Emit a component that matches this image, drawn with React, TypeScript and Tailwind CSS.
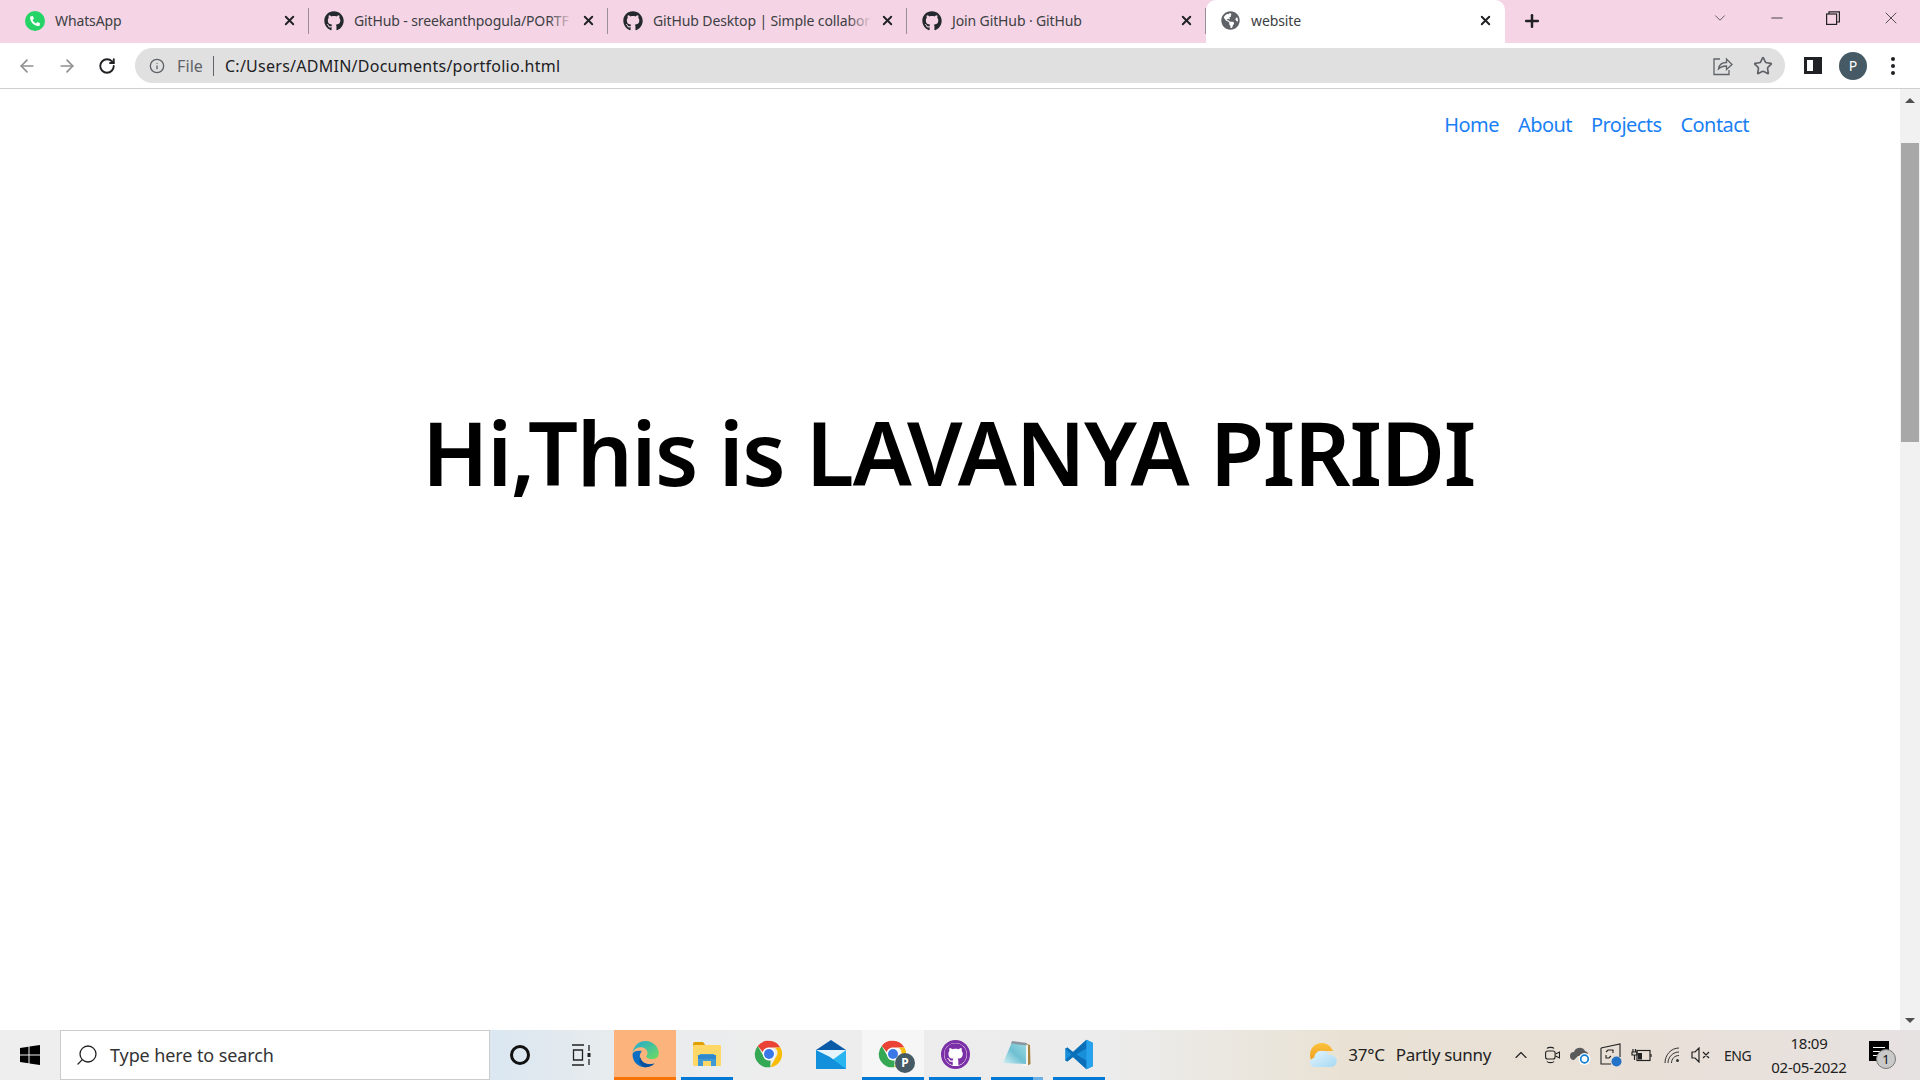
import React from 'react';
import { FaGithub, FaGlobeAmericas, FaPhoneAlt } from 'react-icons/fa';
import { ArrowLeft, ArrowRight, RotateCw, Info, Star, X, Plus, Minus, ChevronDown, ChevronUp, Search } from 'lucide-react';

const font = { fontFamily: '"Noto Sans", sans-serif' };

const Tab: React.FC<{ title: string; icon: React.ReactNode; fade?: boolean; first?: boolean }> = ({ title, icon, fade, first }) => (
  <div className={`flex items-center h-[43px] w-[299px] pl-[15px] pb-[2px] ${first ? 'ml-[10px]' : ''}`}>
    <div className="w-[20px] h-[20px] shrink-0 flex items-center justify-center">{icon}</div>
    <div className="relative flex-1 ml-[10px] whitespace-nowrap text-[14px] tracking-[-0.12px] text-[#3c4043]">
      {title}
      {fade && <div className="absolute right-0 top-0 bottom-0 w-[24px] bg-gradient-to-l from-[#f5d5e5] to-transparent" />}
    </div>
    <X className="w-[15px] h-[15px] ml-[8px] shrink-0 text-[#202124]" strokeWidth={3} />
    <div className="w-px h-[26px] bg-[#9b8f96] ml-[11px] shrink-0" />
  </div>
);

const TaskSlot: React.FC<{ children: React.ReactNode; active?: boolean; open?: boolean; focus?: boolean; multi?: boolean }> = ({ children, active, open, focus, multi }) => (
  <div className={`relative w-[62px] h-[50px] flex items-center justify-center pb-[2px] ${active ? 'bg-[#fdb47c]' : ''} ${focus ? 'bg-[#f6f6f6]' : ''}`}>
    {children}
    {active && <div className="absolute left-0 right-0 bottom-0 h-[3px] bg-[#f97306]" />}
    {open && (
      <div className={`absolute bottom-0 h-[3px] flex ${focus ? 'left-0 right-0' : 'left-[5px] right-[5px]'}`}>
        <div className="flex-1 bg-[#0078d4]" />
        {multi && <div className="w-[10px] bg-[#6cb0e6]" />}
      </div>
    )}
  </div>
);

const ChromeIcon: React.FC<{ size?: number }> = ({ size = 28 }) => (
  <svg width={size} height={size} viewBox="0 0 48 48">
    <path d="M24 3a21 21 0 0 1 18.200 10.500H24a10.500 10.500 0 0 0-10 7.200L6 11A21 21 0 0 1 24 3z" fill="#ea4335" />
    <path d="M42.200 13.500A21 21 0 0 1 26 45L34.700 29.500A10.500 10.500 0 0 0 33 13.500z" fill="#fbbc04" />
    <path d="M26 45A21 21 0 0 1 6 11l9 16a10.500 10.500 0 0 0 11.500 7.200z" fill="#34a853" />
    <circle cx="24" cy="24" r="10" fill="#fff" />
    <circle cx="24" cy="24" r="8" fill="#3b78e7" />
  </svg>
);

const EdgeIcon = () => (
  <svg width="30" height="32" viewBox="0 0 48 48">
    <defs>
      <linearGradient id="edgeTop" x1="0" y1="0" x2="1" y2="1">
        <stop offset="0" stopColor="#1fa9d8" />
        <stop offset="1" stopColor="#6fdc5c" />
      </linearGradient>
    </defs>
    <path d="M4 24C5 10 15 3 25 3c12 0 21 9 21 20 0 6-5 9-11 9-5 0-9-2-9-4 0-1 2-2 2-6 0-6-6-9-11-9C10 13 5 18 4 24z" fill="url(#edgeTop)" />
    <path d="M4 24c0 13 9 21 20 21 6 0 11-2 15-6-5 2-14 2-19-3-5-4-6-11-1-17C12 18 6 19 4 24z" fill="#0a6fc2" />
    <path d="M24 45c6 0 11-2 15-6-5 2-13 2-18-2-2-2-4-5-4-8-2 2-3 7 0 11 2 3 4 5 7 5z" fill="#0c4f9c" />
  </svg>
);

const ExplorerIcon = () => (
  <svg width="28" height="24" viewBox="0 0 28 24">
    <path d="M0 2a2 2 0 0 1 2-2h8l3 4H0z" fill="#e0a100" />
    <rect x="0" y="3" width="28" height="21" rx="1" fill="#ffd766" />
    <path d="M5 24v-8l2-4h14l2 4v8h-5v-5h-8v5z" fill="#3f9ad6" />
    <rect x="5" y="13" width="18" height="4" fill="#2f88c9" />
  </svg>
);

const MailIcon = () => (
  <svg width="30" height="29" viewBox="0 0 30 29">
    <path d="M0 10 15 0l15 10z" fill="#0a5aa8" />
    <path d="M0 10h30v19H0z" fill="#29b6f0" />
    <path d="M0 10l15 11 15-11z" fill="#e6f4fb" />
    <path d="M0 10v19h30L14 17z" fill="#1290dc" />
  </svg>
);

const NotepadIcon = () => (
  <svg width="28" height="27" viewBox="0 0 28 27">
    <defs>
      <linearGradient id="padPage" x1="0" y1="1" x2="1" y2="0">
        <stop offset="0" stopColor="#d6f1f5" />
        <stop offset="0.5" stopColor="#6fc0d2" />
        <stop offset="1" stopColor="#9fdbe6" />
      </linearGradient>
    </defs>
    <path d="M24 3 27 4 27.500 23 24 25z" fill="#a5823f" />
    <path d="M22 3 25 4 25 25 20 25z" fill="#f4f4f0" />
    <path d="M9 1 23 3 23 23 0 22z" fill="url(#padPage)" />
    <path d="M9 0 24 2 23.500 4.500 8 2.500z" fill="#8a979e" />
  </svg>
);

const CodeIcon = () => (
  <svg width="30" height="31" viewBox="0 0 100 100">
    <path d="M96 11 75 1 30 42 11 27l-7 4v38l7 4 19-15 45 41 21-10z" fill="#1a8fd9" />
    <path d="M75 1 30 42 11 27l-7 4 21 19L4 69l7 4 19-15 45 41V71L41 50 75 29z" fill="#0b6fb8" />
    <path d="M75 1l21 10v78l-21 10z" fill="#27a2ec" />
  </svg>
);

const WeatherIcon = () => (
  <svg width="27" height="25" viewBox="0 0 27 25">
    <defs>
      <linearGradient id="wxSun" x1="0" y1="0" x2="0" y2="1">
        <stop offset="0" stopColor="#fcc23a" />
        <stop offset="1" stopColor="#ee9a1e" />
      </linearGradient>
      <linearGradient id="wxCloud" x1="0" y1="0" x2="1" y2="1">
        <stop offset="0" stopColor="#e4f5fd" />
        <stop offset="1" stopColor="#a6d8f3" />
      </linearGradient>
    </defs>
    <path d="M0 12C0 5 5 0 12 0c5 0 9 3 11 8H8L3 20C1 18 0 15 0 12z" fill="url(#wxSun)" />
    <path d="M5 24a4.500 4.500 0 0 1-1-9 8 8 0 0 1 15-3 6 6 0 0 1 3 12z" fill="url(#wxCloud)" />
  </svg>
);

const WindowsLogo = () => (
  <svg width="20" height="20" viewBox="0 0 20 20" fill="#000">
    <path d="M0 3l8.500-1.200V9.500H0zM9.500 1.600 20 0v9.500H9.500zM0 10.500h8.500v7.700L0 17zM9.500 10.500H20V20L9.500 18.400z" />
  </svg>
);

export default function App() {
  return (
    <div className="h-screen w-full flex flex-col overflow-hidden bg-white" style={font}>
      {/* tab strip */}
      <div className="h-[43px] flex bg-[#f5d5e5] shrink-0">
        <Tab first title="WhatsApp" icon={
          <div className="w-[20px] h-[20px] rounded-full bg-[#25d366] flex items-center justify-center">
            <FaPhoneAlt className="w-[10px] h-[10px] text-white" />
          </div>
        } />
        <Tab fade title="GitHub - sreekanthpogula/PORTF" icon={<FaGithub className="w-[20px] h-[20px] text-[#24292f]" />} />
        <Tab fade title="GitHub Desktop | Simple collabor" icon={<FaGithub className="w-[20px] h-[20px] text-[#24292f]" />} />
        <Tab title="Join GitHub · GitHub" icon={<FaGithub className="w-[20px] h-[20px] text-[#24292f]" />} />
        <div className="w-[299px] h-[43px] bg-white rounded-t-[10px] flex items-center pl-[15px] pr-[12px] pb-[2px]">
          <FaGlobeAmericas className="w-[19px] h-[19px] text-[#5f6368]" />
          <span className="ml-[11px] flex-1 text-[14px] tracking-[-0.12px] text-[#3c4043]">website</span>
          <X className="w-[15px] h-[15px] text-[#202124]" strokeWidth={3} />
        </div>
        <div className="w-[54px] flex items-center justify-center pb-[2px]">
          <Plus className="w-[20px] h-[20px] text-[#202124]" strokeWidth={3} />
        </div>
        <div className="flex-1" />
        <div className="flex items-start text-[#333]">
          <div className="w-[58px] h-[36px] flex items-center justify-center"><ChevronDown className="w-[18px] h-[18px]" strokeWidth={1} /></div>
          <div className="w-[55px] h-[36px] flex items-center justify-center"><Minus className="w-[18px] h-[18px]" strokeWidth={1.2} /></div>
          <div className="w-[58px] h-[36px] flex items-center justify-center">
            <svg width="14" height="14" viewBox="0 0 14 14" fill="none" stroke="#222" strokeWidth="1.2"><rect x="0.6" y="3" width="10" height="10.4" /><path d="M3 3V0.8h10.4V11H11" /></svg>
          </div>
          <div className="w-[58px] h-[36px] flex items-center justify-center"><X className="w-[20px] h-[20px]" strokeWidth={1} /></div>
        </div>
      </div>

      {/* toolbar */}
      <div className="h-[46px] flex items-start pt-[5px] border-b border-[#cfcfcf] shrink-0 bg-white">
        <div className="h-[35px] flex items-center">
          <ArrowLeft className="w-[20px] h-[20px] ml-[17px] text-[#8f8f8f]" strokeWidth={2} />
          <ArrowRight className="w-[20px] h-[20px] ml-[20px] text-[#8f8f8f]" strokeWidth={2} />
          <RotateCw className="w-[18px] h-[18px] ml-[21px] text-[#202124]" strokeWidth={2.5} />
        </div>
        <div className="ml-[19px] w-[1650px] h-[35px] rounded-full bg-[#e0e0e0] flex items-center pl-[14px] pr-[12px]">
          <Info className="w-[16px] h-[16px] text-[#5f6368]" strokeWidth={2} />
          <span className="ml-[12px] text-[16px] tracking-[0.1px] text-[#5f6368]">File</span>
          <div className="w-px h-[20px] bg-[#5f6368] ml-[10px]" />
          <span className="ml-[11px] text-[16px] tracking-[0.26px] text-[#202124]">C:/Users/ADMIN/Documents/portfolio.html</span>
          <div className="flex-1" />
          <svg width="20" height="20" viewBox="0 0 20 20" fill="none" stroke="#5f6368" strokeWidth="1.3">
            <path d="M7 3H1v15.500h15V14" />
            <path d="M5.500 13c.5-4 3.500-6.500 8-6.500V3l5.500 5.500-5.500 5V10c-3.500 0-6 1-8 3z" />
          </svg>
          <Star className="w-[20px] h-[20px] ml-[20px] text-[#5f6368]" strokeWidth={2} />
        </div>
        <div className="h-[35px] flex items-center">
          <div className="ml-[19px] w-[18px] h-[17px] bg-white border-[3px] border-[#202124] flex justify-end">
            <div className="w-[6px] h-full bg-[#202124]" />
          </div>
          <div className="ml-[17px] w-[28px] h-[28px] rounded-full bg-[#455a64] text-white text-[14px] flex items-center justify-center">P</div>
          <div className="ml-[24px] flex flex-col gap-[3px]">
            <div className="w-[4px] h-[4px] rounded-full bg-[#202124]" />
            <div className="w-[4px] h-[4px] rounded-full bg-[#202124]" />
            <div className="w-[4px] h-[4px] rounded-full bg-[#202124]" />
          </div>
        </div>
      </div>

      {/* page */}
      <div className="flex-1 flex min-h-0">
        <div className="flex-1 flex flex-col">
          <nav className="flex justify-end gap-[19px] pr-[151px] pt-[22px] text-[20px] leading-[28px] tracking-[-0.55px] text-[#1a7ff5]">
            <a>Home</a>
            <a>About</a>
            <a>Projects</a>
            <a>Contact</a>
          </nav>
          <h1 className="mt-[253px] pr-[3px] text-center text-[88px] leading-[120px] font-semibold tracking-[-1.3px] text-black">Hi,This is LAVANYA PIRIDI</h1>
        </div>
        <div className="w-[20px] bg-[#f1f1f1] flex flex-col items-center">
          <div className="h-[20px] mt-[1px] flex items-center justify-center">
            <div className="w-0 h-0 border-l-[5px] border-r-[5px] border-b-[5px] border-l-transparent border-r-transparent border-b-[#505050]" />
          </div>
          <div className="mt-[33px] w-[18px] h-[299px] bg-[#a8a8a8]" />
          <div className="flex-1" />
          <div className="h-[20px] flex items-center justify-center">
            <div className="w-0 h-0 border-l-[5px] border-r-[5px] border-t-[5px] border-l-transparent border-r-transparent border-t-[#505050]" />
          </div>
        </div>
      </div>

      {/* taskbar */}
      <div className="h-[50px] shrink-0 flex items-center bg-[linear-gradient(90deg,#eeeeee_0%,#eeeeee_3%,#e4e9ee_20%,#dbe7f1_26%,#e6ebee_31%,#ededed_40%,#ececec_58%,#e9e2d4_70%,#e8dfd6_85%,#e7e2e2_100%)]">
        <div className="w-[60px] flex justify-center"><WindowsLogo /></div>
        <div className="w-[430px] h-[50px] bg-white border border-[#cccccc] flex items-center pl-[14px]">
          <Search className="w-[24px] h-[24px] text-[#222] -scale-x-100" strokeWidth={1.3} />
          <span className="ml-[11px] text-[18px] tracking-[-0.1px] text-[#333]">Type here to search</span>
        </div>
        <div className="w-[60px] flex justify-center">
          <div className="w-[20px] h-[20px] rounded-full border-[3px] border-[#111]" />
        </div>
        <div className="w-[64px] flex justify-center">
          <svg width="22" height="22" viewBox="0 0 22 22" fill="none" stroke="#222" strokeWidth="1.3">
            <path d="M1 1h12M1 21h12M2.500 6h9v10h-9zM18 1v6M18 15v6" />
            <rect x="16.500" y="9" width="3" height="4" fill="#222" stroke="none" />
          </svg>
        </div>
        <TaskSlot active><EdgeIcon /></TaskSlot>
        <TaskSlot open><ExplorerIcon /></TaskSlot>
        <TaskSlot><ChromeIcon size={30} /></TaskSlot>
        <TaskSlot><MailIcon /></TaskSlot>
        <TaskSlot open focus>
          <div className="relative">
            <ChromeIcon size={30} />
            <div className="absolute -right-[7px] -bottom-[4px] w-[20px] h-[20px] rounded-full bg-[#455a64] text-white text-[12px] font-bold flex items-center justify-center">P</div>
          </div>
        </TaskSlot>
        <TaskSlot open>
          <div className="w-[29px] h-[29px] rounded-full bg-[#7b2fa6] flex items-center justify-center">
            <div className="w-[23px] h-[23px] rounded-full bg-white flex items-center justify-center">
              <FaGithub className="w-[23px] h-[23px] text-[#7b2fa6]" />
            </div>
          </div>
        </TaskSlot>
        <TaskSlot open multi><NotepadIcon /></TaskSlot>
        <TaskSlot open><CodeIcon /></TaskSlot>

        <div className="flex-1" />

        {/* tray */}
        <div className="flex items-center text-[#222]">
          <WeatherIcon />
          <span className="ml-[11px] text-[17px] tracking-[-0.2px]">37°C</span>
          <span className="ml-[11px] text-[17px] tracking-[-0.3px]">Partly sunny</span>
          <ChevronUp className="ml-[20px] w-[20px] h-[20px]" strokeWidth={1.4} />
          <svg className="ml-[14px]" width="15" height="18" viewBox="0 0 15 18" fill="none" stroke="#222" strokeWidth="1.100">
            <path d="M2 2.500C3 1 8 1 9 2.500M2 15.500c1 1.500 6 1.500 7 0" />
            <rect x="0.600" y="5" width="9.500" height="8" rx="2" />
            <path d="M10.500 8l4-2v6l-4-2" />
          </svg>
          <svg className="ml-[10px]" width="21" height="19" viewBox="0 0 21 19">
            <path d="M4 14a4 4 0 0 1 0-8 6 6 0 0 1 11-1 4 4 0 0 1 3 5H8z" fill="#5b5b5b" />
            <circle cx="14.500" cy="13" r="6" fill="#fff" />
            <circle cx="14.500" cy="13" r="3.800" fill="none" stroke="#0f7fd6" strokeWidth="1.700" />
          </svg>
          <svg className="ml-[9px]" width="22" height="24" viewBox="0 0 22 24" fill="none" stroke="#222" strokeWidth="1.100">
            <path d="M1 5l19-4v13M1 5v16h10" /><path d="M6 9l2-2h5v3M11 13l-2 2H6v-3" />
            <circle cx="16.500" cy="18.500" r="5" fill="#2472c8" stroke="none" />
          </svg>
          <svg className="ml-[9px]" width="21" height="14" viewBox="0 0 21 14" fill="none" stroke="#222" strokeWidth="1.200">
            <rect x="6" y="2.500" width="13" height="10" /><rect x="7" y="5" width="4" height="6.500" fill="#222" stroke="none" /><path d="M20 6v3" /><path d="M2 1v3M4.500 1v3M1 4h5v3H1zM3.500 7v5" />
          </svg>
          <svg className="ml-[12px]" width="16" height="16" viewBox="0 0 16 16" fill="none" stroke="#333" strokeWidth="1">
            <path d="M1 16C1 8 7 1 15 1M4 16c0-6 5-11 11-11M7.500 16c0-4 3-7.500 7.500-7.500" />
            <circle cx="13.500" cy="13.500" r="1.500" fill="#333" stroke="none" />
          </svg>
          <svg className="ml-[11px]" width="19" height="16" viewBox="0 0 19 16" fill="none" stroke="#222" strokeWidth="1.200">
            <path d="M1 5h3l4-4v14l-4-4H1zM12 5l6 6M18 5l-6 6" />
          </svg>
          <span className="ml-[14px] w-[32px] text-[14px] tracking-[-0.45px]">ENG</span>
          <div className="ml-[13px] w-[80px] flex flex-col items-center text-[15px] leading-[24px] tracking-[-0.3px]">
            <span>18:09</span>
            <span>02-05-2022</span>
          </div>
          <div className="relative ml-[20px] mr-[24px] w-[27px] h-[28px]">
            <div className="w-[20px] h-[20px] bg-black flex flex-col justify-center gap-[3px] px-[4px]">
              <div className="h-px bg-white" /><div className="h-px bg-white" /><div className="h-px bg-white" />
            </div>
            <div className="absolute right-0 bottom-0 w-[20px] h-[20px] rounded-full bg-[#c9c9c9] border border-[#777] text-[13px] leading-[18px] text-center text-[#111]">1</div>
          </div>
        </div>
      </div>
    </div>
  );
}
